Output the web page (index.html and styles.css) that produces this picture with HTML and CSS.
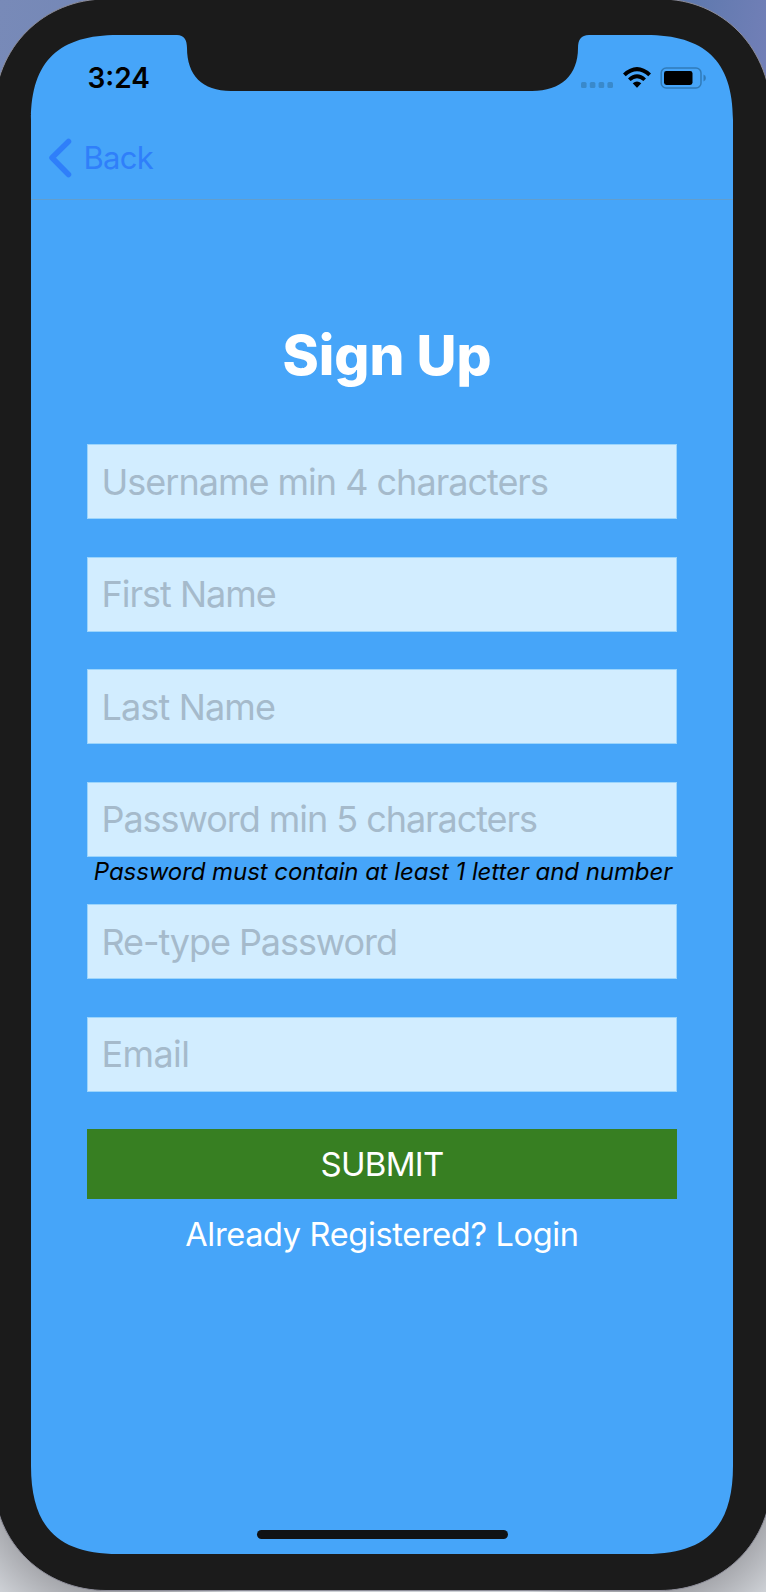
FILE: index.html
```html
<!DOCTYPE html>
<html lang="en">
<head>
<meta charset="utf-8">
<title>Sign Up</title>
<link rel="stylesheet" href="styles.css">
</head>
<body>
<div class="stage">
  <svg class="device" viewBox="0 0 766 1592" aria-hidden="true">
    <path class="device-body" d="M-6 114C-6 46 45 -1 106 -1H660C721 -1 772 46 772 120V1476C772 1544 721 1590.500 660 1590.500H106C45 1590.500 -6 1544 -6 1480Z"/>
    <path class="device-screen" d="M31 120C31 60 60 35 118 35H177C184 35 187 40 187 48C187 75 202 91 231 91H532C561 91 578 75 578 48C578 40 581 35 589 35H646C704 35 733 60 733 120V1466C733 1529 704 1554 646 1554H118C60 1554 31 1529 31 1466Z"/>
  </svg>
  <main class="screen">
    <header class="status">
      <span class="time">3:24</span>
      <div class="indicators">
        <svg class="dots" viewBox="0 0 32 6"><rect width="5.600" height="6" rx="1.600"/><rect x="8.800" width="5.600" height="6" rx="1.600"/><rect x="17.600" width="5.600" height="6" rx="1.600"/><rect x="26.400" width="5.600" height="6" rx="1.600"/></svg>
        <svg class="wifi" viewBox="0 0 28 21"><path d="M0 6.500Q14 -6.500 28 6.500L25.300 9.300Q14 -.8 2.700 9.300Z"/><path d="M5 11.400Q14 3.200 23 11.400L20.400 14.100Q14 8.500 7.600 14.100Z"/><path d="M9.700 16.200Q14 12.800 18.300 16.200L14.800 20Q14 21 13.200 20Z"/></svg>
        <svg class="battery" viewBox="0 0 46 22"><rect class="shell" x="1.200" y="1" width="39.800" height="20" rx="5"/><rect x="4" y="4" width="28.500" height="14" rx="2.400"/><path class="cap" d="M43.500 7.500Q45.900 8.300 45.900 11Q45.900 13.700 43.500 14.500Z"/></svg>
      </div>
    </header>
    <nav class="nav">
      <svg class="chevron" viewBox="0 0 24 40"><path d="M20.500 3.500L4 19.800L20.500 36.500"/></svg>
      <span class="back">Back</span>
    </nav>
    <form class="form">
      <h1 class="title">Sign Up</h1>
      <div class="field"><span class="ph username">Username min 4 characters</span></div>
      <div class="field"><span class="ph first">First Name</span></div>
      <div class="field"><span class="ph last">Last Name</span></div>
      <div class="field password-field"><span class="ph password">Password min 5 characters</span></div>
      <p class="hint">Password must contain at least 1 letter and number</p>
      <div class="field"><span class="ph retype">Re-type Password</span></div>
      <div class="field"><span class="ph email">Email</span></div>
      <div class="submit"><span>SUBMIT</span></div>
      <p class="login">Already Registered? Login</p>
    </form>
    <div class="home"></div>
  </main>
</div>
</body>
</html>
```
FILE: styles.css
```css
* { box-sizing: border-box; }
body {
  margin: 0;
  font-family: Inter, "Liberation Sans", sans-serif;
}
.stage {
  position: relative;
  width: 766px;
  height: 1592px;
  overflow: hidden;
  padding: 35px 33px 38px 31px;
  background:
    radial-gradient(circle at 120px 1470px, #85858a 90px, transparent 170px),
    radial-gradient(circle at 646px 1470px, #85858a 90px, transparent 170px),
    linear-gradient(100deg, #788ab8, #5f79ae 88%, #7480b8) top / 100% 120px no-repeat,
    #cdd0d5;
}
.device {
  position: absolute;
  left: 0;
  top: 0;
  width: 766px;
  height: 1592px;
}
.device-body { fill: #1b1b1b; stroke: #8c8c98; stroke-width: 1; }
.device-screen { fill: #46a5f9; }
.screen {
  position: relative;
  display: flex;
  flex-direction: column;
  height: 1519px;
}
.status {
  display: flex;
  justify-content: space-between;
  align-items: flex-start;
  height: 90px;
  padding: 32px 27px 0 56.500px;
}
.time { font-size: 28px; line-height: 22px; font-weight: 600; }
.indicators { display: flex; align-items: flex-start; }
.dots { width: 32px; height: 6px; margin: 15px 10px 0 0; fill: #3989cb; }
.wifi { width: 28px; height: 21px; margin-right: 9px; }
.battery { width: 46px; height: 22px; }
.shell { fill: none; stroke: #307bb9; stroke-width: 1.5; }
.cap { fill: #307bb9; }
.nav {
  display: flex;
  align-items: center;
  height: 75px;
  padding: 0 0 9px 17px;
  border-bottom: 1px solid #629ecd;
  color: #2f7ffa;
}
.chevron { width: 24px; height: 40px; margin-right: 11.500px; }
.chevron path { fill: none; stroke: #2f7ffa; stroke-width: 5.500; stroke-linecap: round; stroke-linejoin: round; }
.back { font-size: 31px; line-height: 40px; letter-spacing: -.7px; }
.form {
  display: flex;
  flex-direction: column;
  padding: 121px 56px 0;
}
.title {
  margin: 0 0 55.400px;
  padding-left: 10px;
  font-size: 55px;
  line-height: 68px;
  font-weight: 800;
  letter-spacing: 0;
  text-align: center;
  color: #fff;
}
.field {
  display: flex;
  align-items: center;
  height: 75px;
  margin-bottom: 37.400px;
  padding-left: 13.500px;
  border: 1px solid #9cd5fc;
  background: #d2edff;
  color: #a5bacb;
}
.ph { font-size: 36px; line-height: 44px; letter-spacing: -1px; white-space: nowrap; }
.last { letter-spacing: -.85px; }
.password { letter-spacing: -1.05px; }
.retype { letter-spacing: -1.08px; }
.email { letter-spacing: -.6px; }
.password-field { margin-bottom: 0; }
.hint {
  height: 47.800px;
  margin: 0;
  padding-left: 2px;
  font-size: 24px;
  line-height: 30px;
  font-style: italic;
  letter-spacing: -.07px;
  text-align: center;
  white-space: nowrap;
}
.submit {
  display: flex;
  align-items: center;
  justify-content: center;
  height: 70.500px;
  margin-top: -.5px;
  background: #377f22;
  color: #fff;
  font-size: 33px;
  letter-spacing: -.7px;
}
.login {
  margin: 16px 0 0;
  font-size: 32.500px;
  line-height: 40px;
  letter-spacing: -.33px;
  text-align: center;
  color: #fff;
}
.home {
  width: 251px;
  height: 9px;
  margin: auto auto 15px;
  border-radius: 5px;
  background: #101214;
}
```
